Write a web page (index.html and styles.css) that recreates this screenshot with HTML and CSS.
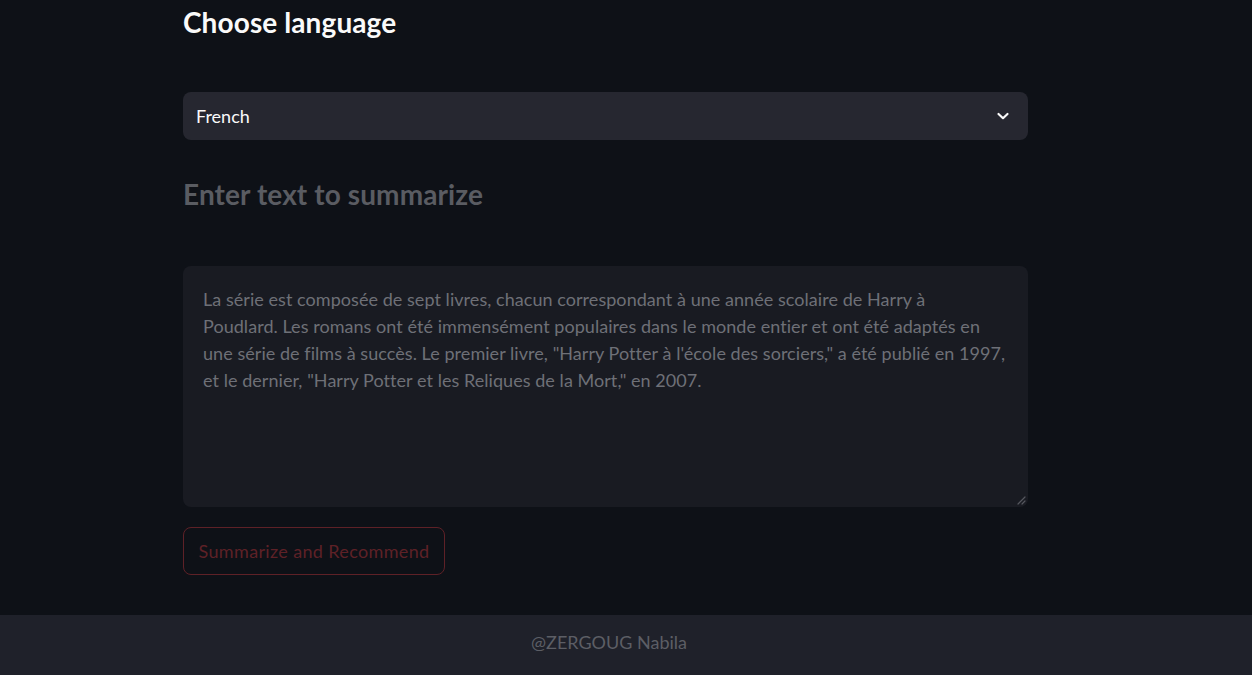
FILE: index.html
```html
<!DOCTYPE html>
<html lang="fr">
<head>
<meta charset="utf-8">
<title>Summarizer</title>
<link rel="stylesheet" href="styles.css">
</head>
<body>
<div class="page">
  <main class="main">
    <h2 class="title">Choose language</h2>
    <div class="select">
      <span class="select-value">French</span>
      <svg class="chev" width="14" height="14" viewBox="0 0 14 14"><path d="M2.5 5 L7 9.2 L11.5 5" fill="none" stroke="#fafafa" stroke-width="2.2" stroke-linecap="round" stroke-linejoin="round"/></svg>
    </div>
    <h2 class="title title-muted">Enter text to summarize</h2>
    <div class="textarea">
      <p class="textarea-text">La série est composée de sept livres, chacun correspondant à une année scolaire de Harry à<br>Poudlard. Les romans ont été immensément populaires dans le monde entier et ont été adaptés en<br>une série de films à succès. Le premier livre, "Harry Potter à l'école des sorciers," a été publié en 1997,<br>et le dernier, "Harry Potter et les Reliques de la Mort," en 2007.</p>
      <svg class="grip" width="10" height="10" viewBox="0 0 10 10"><path d="M9 2 L2 9 M9 6 L6 9" stroke="#55575e" stroke-width="1.2" stroke-linecap="round"/></svg>
    </div>
    <div class="actions">
      <button class="btn">Summarize and Recommend</button>
    </div>
  </main>
  <footer class="footer">@ZERGOUG Nabila</footer>
</div>
</body>
</html>
```
FILE: styles.css
```css
* { box-sizing: border-box; }
html, body { margin: 0; padding: 0; }
body {
  background: #0e1117;
  font-family: "Source Sans Pro", Lato, "Noto Sans", sans-serif;
  color: #fafafa;
  width: 1252px;
  height: 675px;
  overflow: hidden;
}
.page {
  display: flex;
  flex-direction: column;
  height: 675px;
}
.main {
  flex: 1;
  width: 845px;
  margin-left: 183px;
  display: flex;
  flex-direction: column;
}
.title {
  margin: 0;
  font-size: 28px;
  font-weight: 700;
  line-height: 44px;
  color: #fafafa;
  letter-spacing: 0.1px;
}
.title-muted {
  color: #5a5c62;
  margin-top: 32px;
  height: 44px;
}
.select {
  margin-top: 48px;
  height: 48px;
  background: #262730;
  border-radius: 8px;
  display: flex;
  align-items: center;
  justify-content: space-between;
  padding: 0 18px 0 13px;
}
.select-value {
  font-size: 18px;
  color: #fafafa;
}
.chev { display: block; }
.textarea {
  position: relative;
  margin-top: 50px;
  height: 241px;
  background: #191b22;
  border-radius: 8px;
  padding: 20px 20px;
}
.textarea-text {
  margin: 0;
  font-size: 18px;
  line-height: 27px;
  color: #6e7077;
  letter-spacing: 0.05px;
  white-space: nowrap;
}
.grip {
  position: absolute;
  right: 2px;
  bottom: 2px;
}
.actions {
  margin-top: 20px;
}
.btn {
  height: 48px;
  padding: 0 10px;
  background: transparent;
  border: 1px solid #5e2127;
  border-radius: 8px;
  color: #5e2127;
  font-family: inherit;
  font-size: 18px;
  letter-spacing: 0.35px;
  width: 262px;
}
.footer {
  height: 60px;
  background: #1f212a;
  color: #5c5e65;
  font-size: 18px;
  display: flex;
  align-items: center;
  justify-content: center;
  padding-right: 34px;
  padding-bottom: 6px;
}
```
